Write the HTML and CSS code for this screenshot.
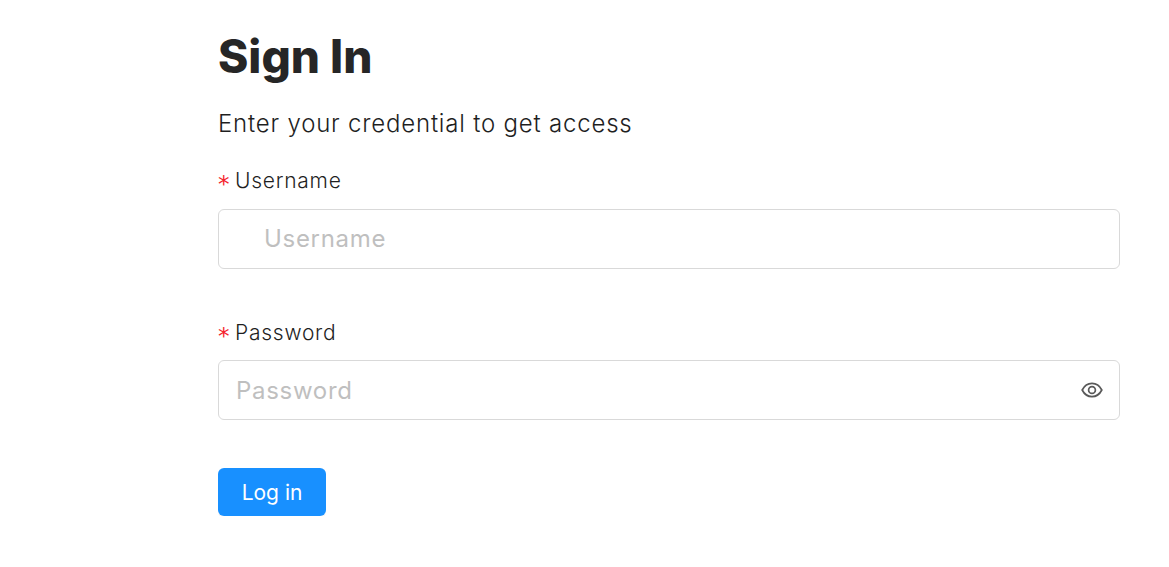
FILE: index.html
```html
<!DOCTYPE html>
<html lang="en">
<head>
<meta charset="utf-8">
<title>Sign In</title>
<link rel="stylesheet" href="styles.css">
</head>
<body>
<main class="page">
  <h1 class="title">Sign In</h1>
  <p class="subtitle">Enter your credential to get access</p>
  <form class="form">
    <div class="field">
      <label class="label" for="username"><span class="req">*</span>Username</label>
      <div class="box box-user"><input id="username" class="input" type="text" placeholder="Username"></div>
    </div>
    <div class="field">
      <label class="label" for="password"><span class="req">*</span>Password</label>
      <div class="box">
        <input id="password" class="input" type="password" placeholder="Password">
        <svg class="eye" viewBox="0 0 22 16" width="22" height="16" fill="none" stroke="#595959" stroke-width="1.7">
          <path d="M1.2 8C3.4 3.6 6.7 1.4 11 1.4S18.6 3.6 20.8 8C18.6 12.4 15.3 14.6 11 14.6S3.4 12.4 1.2 8Z"/>
          <circle cx="11" cy="8" r="3.4"/>
        </svg>
      </div>
    </div>
    <button class="btn" type="button">Log in</button>
  </form>
</main>
</body>
</html>
```
FILE: styles.css
```css
* { box-sizing: border-box; }
html, body { margin: 0; background: #fff; }
body { font-family: Inter, "Noto Sans", sans-serif; color: #1f1f1f; }
.page { margin-left: 218px; width: 902px; padding-top: 28px; }
.title { margin: 0; font-size: 46px; line-height: 56px; font-weight: 800; color: #262626; }
.subtitle { margin: 24px 0 0; font-size: 24px; line-height: 32px; font-weight: 300; letter-spacing: 0.8px; color: #1f1f1f; }
.form { margin-top: 28px; display: flex; flex-direction: column; align-items: flex-start; }
.field { width: 100%; height: 152px; }
.label { display: flex; align-items: center; height: 32px; font-size: 21px; font-weight: 300; letter-spacing: 0.75px; margin-top: -4px; margin-bottom: 13px; }
.field + .field .label { margin-bottom: 12px; }
.req { color: #f5222d; width: 17px; height: 32px; font: 400 23px/32px "DejaVu Sans", sans-serif; padding-top: 4px; letter-spacing: 0; }
.box { height: 60px; border: 1px solid #d9d9d9; border-radius: 6px; display: flex; align-items: center; padding: 0 17px; }
.box-user { padding-left: 45px; }
.input { flex: 1; min-width: 0; border: 0; outline: 0; padding: 0 0 2px; background: transparent; font: 300 24px Inter, sans-serif; letter-spacing: 0.7px; color: #1f1f1f; }
.field + .field .input { padding-bottom: 0; }
.input::placeholder { color: #bfbfbf; opacity: 1; font-weight: 400; }
.eye { flex: none; margin-right: -1px; }
.btn { margin-top: -4px; width: 108px; height: 48px; border: 0; border-radius: 6px; background: #1890ff; color: #fff; font: 400 21px Inter, sans-serif; box-shadow: 0 2px 0 rgba(0,0,0,0.045); }
```
